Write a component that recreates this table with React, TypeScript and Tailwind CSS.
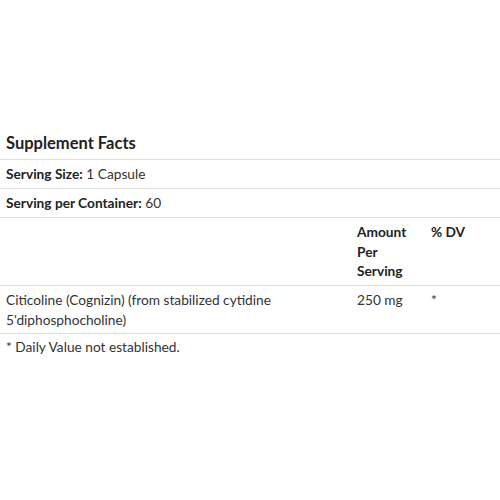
export default function App() {
  return (
    <div className="min-h-[500px] w-[500px] bg-white pt-[132px] font-['Lato',sans-serif] text-[13.7px] leading-[19.5px] text-[#333]">
      <h2 className="px-[6px] pb-[4px] text-[16.5px] font-bold leading-[23px] text-[#222]">Supplement Facts</h2>
      <table className="w-full border-collapse">
        <tbody>
          <tr className="border-t border-[#ddd]">
            <td colSpan={3} className="px-[6px] pt-[4px] pb-[4.5px]">
              <span className="font-bold text-[#222]">Serving Size:</span> 1 Capsule
            </td>
          </tr>
          <tr className="border-t border-[#ddd]">
            <td colSpan={3} className="px-[6px] pt-[4px] pb-[4.5px]">
              <span className="font-bold text-[#222]">Serving per Container:</span> 60
            </td>
          </tr>
          <tr className="border-t border-[#ddd] align-top">
            <td className="px-[6px] pt-[4px] pb-[4.5px]"></td>
            <td className="w-[74px] px-[6px] pt-[4px] pb-[4.5px] font-bold text-[#222]">Amount Per Serving</td>
            <td className="w-[75px] px-[6px] pt-[4px] pb-[4.5px] font-bold text-[#222]">% DV</td>
          </tr>
          <tr className="border-t border-b border-[#ddd] align-top">
            <td className="px-[6px] pt-[4px] pb-[4px]">Citicoline (Cognizin) (from stabilized cytidine 5'diphosphocholine)</td>
            <td className="px-[6px] pt-[4px] pb-[4px]">250 mg</td>
            <td className="px-[6px] pt-[4px] pb-[4px]">*</td>
          </tr>
        </tbody>
      </table>
      <p className="px-[6px] pt-[3px]">* Daily Value not established.</p>
    </div>
  );
}
